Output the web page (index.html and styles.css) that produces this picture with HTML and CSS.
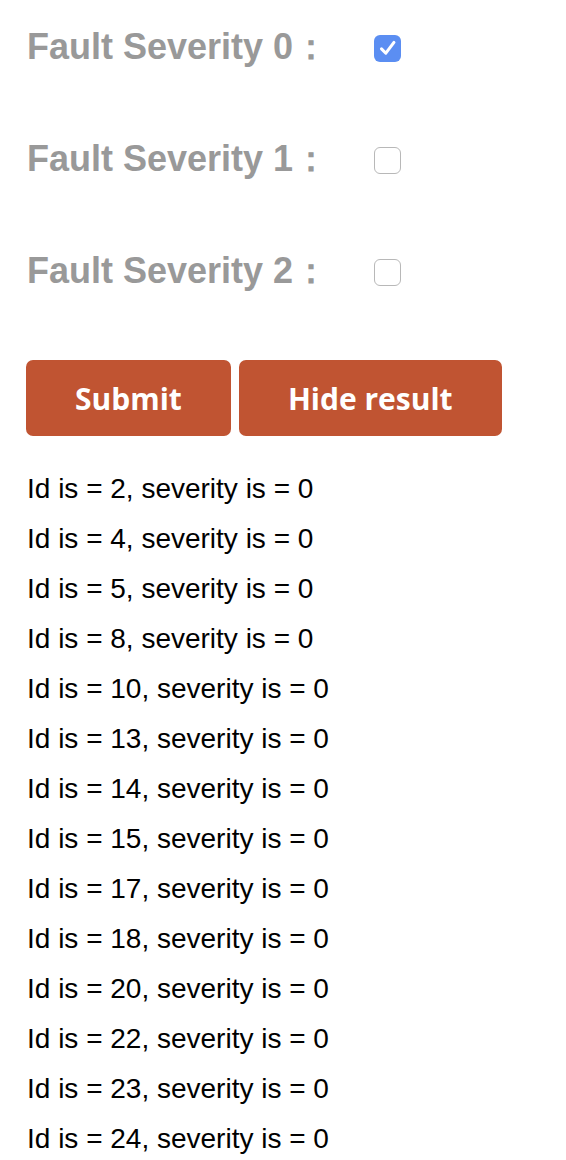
FILE: index.html
```html
<!DOCTYPE html>
<html>
<head>
<meta charset="utf-8">
<link rel="stylesheet" href="styles.css">
</head>
<body>
<div class="page">
  <form class="filters">
    <div class="row">
      <span class="label">Fault Severity 0：</span>
      <span class="box checked"><svg viewBox="0 0 24 24" width="26" height="26"><path d="M6 12.8 L10 16.8 L17.5 6.8" fill="none" stroke="#fff" stroke-width="2.8" stroke-linecap="round" stroke-linejoin="round"/></svg></span>
    </div>
    <div class="row">
      <span class="label">Fault Severity 1：</span>
      <span class="box"></span>
    </div>
    <div class="row">
      <span class="label">Fault Severity 2：</span>
      <span class="box"></span>
    </div>
    <div class="buttons">
      <button type="button" class="btn">Submit</button>
      <button type="button" class="btn">Hide result</button>
    </div>
  </form>
  <ul class="results">
    <li>Id is = 2, severity is = 0</li>
    <li>Id is = 4, severity is = 0</li>
    <li>Id is = 5, severity is = 0</li>
    <li>Id is = 8, severity is = 0</li>
    <li>Id is = 10, severity is = 0</li>
    <li>Id is = 13, severity is = 0</li>
    <li>Id is = 14, severity is = 0</li>
    <li>Id is = 15, severity is = 0</li>
    <li>Id is = 17, severity is = 0</li>
    <li>Id is = 18, severity is = 0</li>
    <li>Id is = 20, severity is = 0</li>
    <li>Id is = 22, severity is = 0</li>
    <li>Id is = 23, severity is = 0</li>
    <li>Id is = 24, severity is = 0</li>
  </ul>
</div>
</body>
</html>
```

FILE: styles.css
```css
html, body {
  margin: 0;
  padding: 0;
  background: #fff;
}
.page {
  padding: 0 26px;
}
.filters {
  display: flex;
  flex-direction: column;
}
.row {
  display: flex;
  align-items: center;
  height: 112px;
}
.row:first-child {
  margin-top: -9px;
}
.label {
  width: 348px;
  font-family: "Liberation Sans", Arial, sans-serif;
  font-weight: bold;
  font-size: 36px;
  color: #999;
  padding-left: 1px;
  box-sizing: border-box;
}
.box {
  width: 27px;
  height: 27px;
  box-sizing: border-box;
  border: 1.5px solid #b8b8b8;
  border-radius: 6px;
  background: #fff;
  display: flex;
  align-items: center;
  justify-content: center;
  margin-top: 2px;
}
.box.checked {
  border: none;
  background: #5b8ef2;
}
.buttons {
  display: flex;
  gap: 8px;
  margin-top: 33px;
}
.btn {
  height: 76px;
  padding: 0 49px;
  border: none;
  border-radius: 7px;
  background: #c05432;
  color: #fff;
  font-family: "Open Sans", sans-serif;
  font-weight: bold;
  font-size: 30px;
}
.results {
  list-style: none;
  margin: 28px 0 0;
  padding: 0 0 0 1px;
  font-family: "Liberation Sans", Arial, sans-serif;
  font-size: 28px;
  color: #000;
}
.results li {
  height: 50px;
  line-height: 50px;
}
```
